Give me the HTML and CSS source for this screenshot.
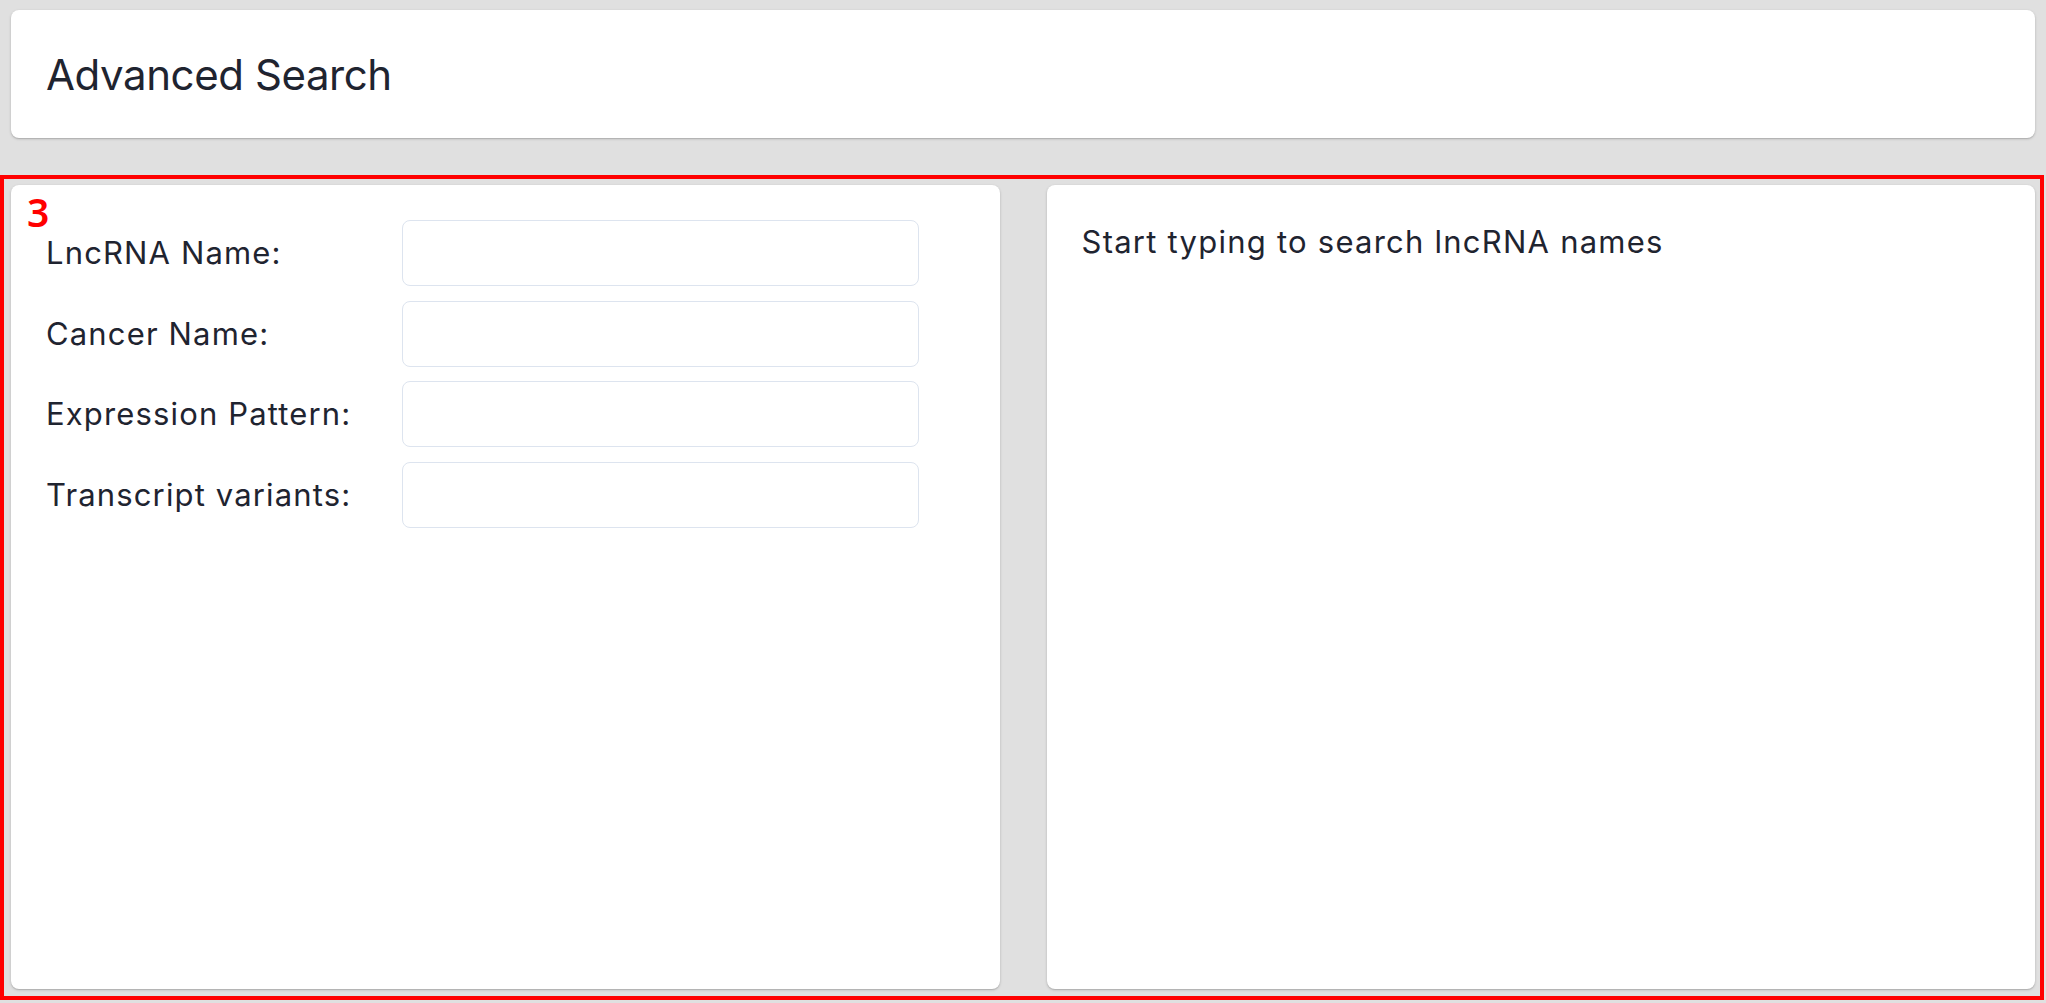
FILE: index.html
```html
<!DOCTYPE html>
<html lang="en">
<head>
<meta charset="utf-8">
<title>Advanced Search</title>
<link rel="stylesheet" href="styles.css">
</head>
<body>
<div class="page">
  <header class="card header-card">
    <h1 class="title">Advanced Search</h1>
  </header>
  <main class="panels">
    <section class="card form-card">
      <div class="field">
        <label class="label" for="f1">LncRNA Name:</label>
        <input class="input" id="f1" type="text">
      </div>
      <div class="field">
        <label class="label" for="f2">Cancer Name:</label>
        <input class="input" id="f2" type="text">
      </div>
      <div class="field">
        <label class="label" for="f3">Expression Pattern:</label>
        <input class="input" id="f3" type="text">
      </div>
      <div class="field">
        <label class="label" for="f4">Transcript variants:</label>
        <input class="input" id="f4" type="text">
      </div>
    </section>
    <section class="card result-card">
      <p class="hint">Start typing to search lncRNA names</p>
    </section>
  </main>
</div>
<div class="annotation"><span class="annotation-num">3</span></div>
</body>
</html>
```
FILE: styles.css
```css
* { box-sizing: border-box; }
html, body {
  margin: 0;
  padding: 0;
  background: #e0e0e0;
  font-family: Inter, "Noto Sans", "Liberation Sans", sans-serif;
  color: #1f2430;
}
.page {
  padding: 10px 11px 14px 11px;
  height: 1003px;
  display: flex;
  flex-direction: column;
}
.card {
  background: #ffffff;
  border-radius: 8px;
  box-shadow: 0 1px 3px rgba(0,0,0,0.18), 0 1px 1px rgba(0,0,0,0.10);
}
.header-card {
  height: 128px;
  display: flex;
  align-items: center;
  padding-left: 35px;
}
.title {
  margin: 0;
  font-size: 42px;
  font-weight: 400;
  letter-spacing: -0.01em;
  line-height: 1.2;
  padding-top: 3px;
}
.panels {
  margin-top: 47px;
  flex: 1;
  display: grid;
  grid-template-columns: 1fr 1fr;
  gap: 47px;
}
.form-card {
  padding: 35px 35px;
  display: flex;
  flex-direction: column;
  gap: 14.5px;
}
.field {
  display: flex;
  align-items: center;
}
.label {
  width: 356px;
  flex: none;
  font-size: 31px;
  letter-spacing: 0.037em;
  line-height: 1.2;
}
.input {
  width: 517px;
  height: 66px;
  border: 1.5px solid #dde4ef;
  border-radius: 8px;
  background: #fff;
  outline: none;
  font: inherit;
}
.result-card {
  padding: 38px 35px;
}
.hint {
  margin: 0;
  font-size: 31px;
  letter-spacing: 0.04em;
  line-height: 1.2;
}
.annotation {
  position: absolute;
  left: 0;
  top: 175px;
  width: 2044px;
  height: 825px;
  border: 4px solid #ff0000;
  pointer-events: none;
}
.annotation-num {
  position: absolute;
  left: 23px;
  top: 13px;
  font-family: "Noto Sans", "Liberation Sans", sans-serif;
  font-size: 39px;
  font-weight: 600;
  line-height: 1;
  color: #ff0000;
}
```
